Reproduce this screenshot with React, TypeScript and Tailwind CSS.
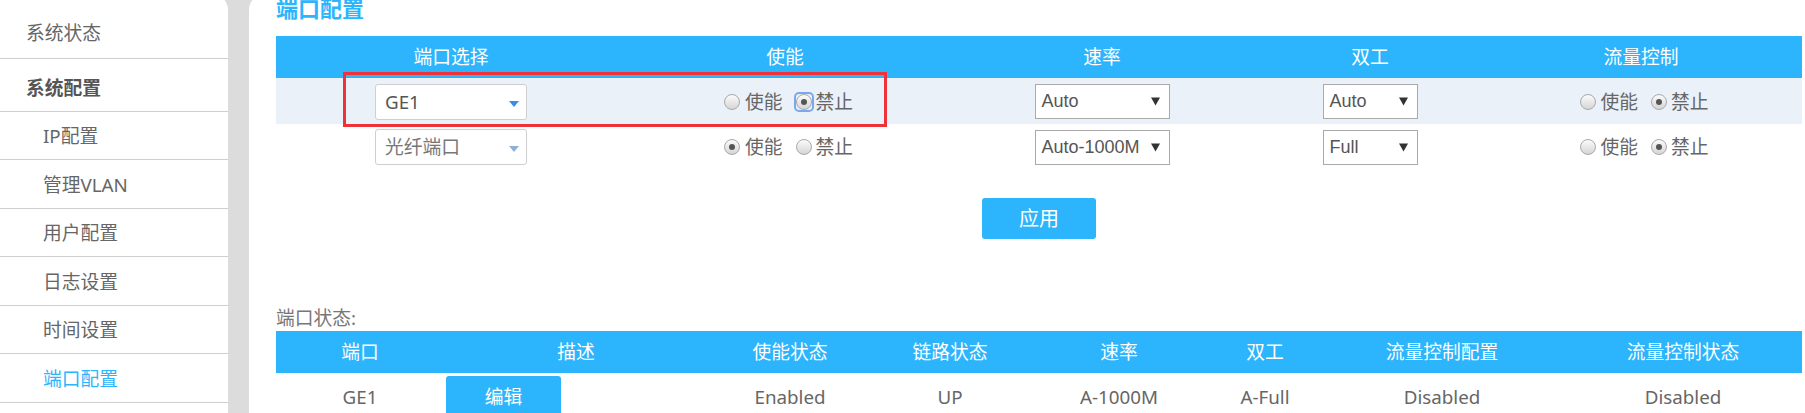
import React from "react";
import clsx from "clsx";

const menu = [
  { label: "系统状态", h: "h-[65px]", pad: "pt-[14px] pl-[26px]", kind: "top" },
  { label: "系统配置", h: "h-[53px]", pad: "pt-[7px] pl-[26px]", kind: "group" },
  { label: "IP配置", h: "h-[48px]", pad: "pt-[2px] pl-[43px]", kind: "sub" },
  { label: "管理VLAN", h: "h-[49px]", pad: "pt-[2px] pl-[43px]", kind: "sub" },
  { label: "用户配置", h: "h-[48px]", pad: "pt-[2px] pl-[43px]", kind: "sub" },
  { label: "日志设置", h: "h-[49px]", pad: "pt-[2px] pl-[43px]", kind: "sub" },
  { label: "时间设置", h: "h-[48px]", pad: "pt-[2px] pl-[43px]", kind: "sub" },
  { label: "端口配置", h: "h-[49px]", pad: "pt-[2px] pl-[43px]", kind: "active" },
];

function Radio({ checked, focus }: { checked?: boolean; focus?: boolean }) {
  return (
    <span
      className={clsx(
        "flex h-[16px] w-[16px] items-center justify-center",
        focus ? "rounded-[3px] outline-2 outline-[#7ba7ef]" : "rounded-full"
      )}
    >
      <span className="flex h-[16px] w-[16px] items-center justify-center rounded-full border border-[#a9a9a9] bg-linear-to-b from-[#fbfbfb] to-[#d5d5d5]">
        {checked && <span className="h-[6px] w-[6px] rounded-full bg-[#555]" />}
      </span>
    </span>
  );
}

function RadioPair({ on, focusOff }: { on: boolean; focusOff?: boolean }) {
  return (
    <div className="flex items-center text-[#666]">
      <Radio checked={on} />
      <span className="ml-[5px]">使能</span>
      <span className="ml-[13px]">
        <Radio checked={!on} focus={focusOff} />
      </span>
      <span className="ml-[4px]">禁止</span>
    </div>
  );
}

function PortSelect({ text, dim }: { text: string; dim?: boolean }) {
  return (
    <div className="flex h-[36px] w-[152px] items-center justify-between rounded-[3px] border border-[#cfcfcf] bg-white pl-[9px] pr-[7px]">
      <span className={dim ? "text-[#777]" : "text-[#555]"}>{text}</span>
      <svg width="10" height="6" viewBox="0 0 10 6" className="mt-[3px]">
        <path d="M0 0h10L5 6z" fill={dim ? "#8fb0d2" : "#3a8ee6"} />
      </svg>
    </div>
  );
}

function NativeSelect({ text, w }: { text: string; w: string }) {
  return (
    <div
      className={clsx(
        "flex h-[35px] items-center justify-between border border-[#a9a9a9] bg-white pl-[6px] pr-[9px] font-['Liberation_Sans',sans-serif] text-[18px] text-[#555]",
        w
      )}
    >
      <span>{text}</span>
      <svg width="9" height="9" viewBox="0 0 9 9">
        <path d="M0 0.5h9L4.5 8.5z" fill="#333" />
      </svg>
    </div>
  );
}

const cfgCols = "grid grid-cols-[350px_318px_316px_220px_322px]";
const statCols = "grid grid-cols-[168px_264px_164px_156px_182px_110px_244px_238px]";

export default function App() {
  return (
    <div className="flex h-[413px] w-[1805px] overflow-hidden bg-[#dcdcdc] font-['Noto_Sans','Noto_Sans_CJK_SC',sans-serif] text-[18.75px]">
      {/* left menu */}
      <aside className="mt-[-6px] h-[419px] w-[228px] shrink-0 rounded-tr-[16px] bg-white">
        {menu.map((m) => (
          <div
            key={m.label}
            className={clsx(
              "flex items-center border-b border-[#cfcfcf]",
              m.h,
              m.pad,
              m.kind === "group" && "font-bold text-[#555]",
              m.kind === "active" && "text-[#2cb5fd]",
              (m.kind === "top" || m.kind === "sub") && "text-[#666]"
            )}
          >
            {m.label}
          </div>
        ))}
      </aside>

      {/* main panel */}
      <main className="mt-[-6px] ml-[21px] h-[419px] flex-1 rounded-tl-[16px] bg-white pl-[27px] pr-[3px]">
        <div className="flex h-[42px] items-end pb-[17px]">
          <h1 className="text-[22px] leading-[22px] font-bold text-[#2cb5fd]">端口配置</h1>
        </div>

        <div className="relative w-[1526px]">
          <div className={clsx(cfgCols, "h-[42px] items-center bg-[#2cb5fd] text-center text-white")}>
            <div>端口选择</div>
            <div>使能</div>
            <div>速率</div>
            <div>双工</div>
            <div>流量控制</div>
          </div>
          <div className={clsx(cfgCols, "h-[46px] items-center bg-[#eaf1f9]")}>
            <div className="flex justify-center pt-[2px]">
              <PortSelect text="GE1" />
            </div>
            <div className="flex justify-center pl-[7px] pt-[2px]">
              <RadioPair on={false} focusOff />
            </div>
            <div className="flex justify-center">
              <NativeSelect text="Auto" w="w-[135px]" />
            </div>
            <div className="flex justify-center">
              <NativeSelect text="Auto" w="w-[95px]" />
            </div>
            <div className="flex justify-center pl-[6px] pt-[2px]">
              <RadioPair on={false} />
            </div>
          </div>
          <div className={clsx(cfgCols, "h-[46px] items-center")}>
            <div className="flex justify-center">
              <PortSelect text="光纤端口" dim />
            </div>
            <div className="flex justify-center pl-[7px]">
              <RadioPair on />
            </div>
            <div className="flex justify-center">
              <NativeSelect text="Auto-1000M" w="w-[135px]" />
            </div>
            <div className="flex justify-center">
              <NativeSelect text="Full" w="w-[95px]" />
            </div>
            <div className="flex justify-center pl-[6px]">
              <RadioPair on={false} />
            </div>
          </div>

          {/* highlight box */}
          <div className="absolute top-[36px] left-[67px] h-[55px] w-[544px] border-3 border-[#ef3138]" />

          <div className="mt-[28px] flex justify-center">
            <button className="h-[41px] w-[114px] rounded-[3px] bg-[#2cb5fd] text-[20px] text-white">应用</button>
          </div>
        </div>

        <div className="mt-[66px] h-[26px] leading-[26px] text-[#777]">端口状态:</div>

        <div className="w-[1526px]">
          <div className={clsx(statCols, "h-[42px] items-center bg-[#2cb5fd] text-center text-white")}>
            <div>端口</div>
            <div>描述</div>
            <div>使能状态</div>
            <div>链路状态</div>
            <div>速率</div>
            <div>双工</div>
            <div>流量控制配置</div>
            <div>流量控制状态</div>
          </div>
          <div className={clsx(statCols, "h-[48px] items-center text-center text-[#666]")}>
            <div>GE1</div>
            <div className="flex h-full items-start pt-[3px] pl-[2px]">
              <button className="h-[42px] w-[115px] rounded-t-[3px] bg-[#2cb5fd] text-white">编辑</button>
            </div>
            <div>Enabled</div>
            <div>UP</div>
            <div>A-1000M</div>
            <div>A-Full</div>
            <div>Disabled</div>
            <div>Disabled</div>
          </div>
        </div>
      </main>
    </div>
  );
}
